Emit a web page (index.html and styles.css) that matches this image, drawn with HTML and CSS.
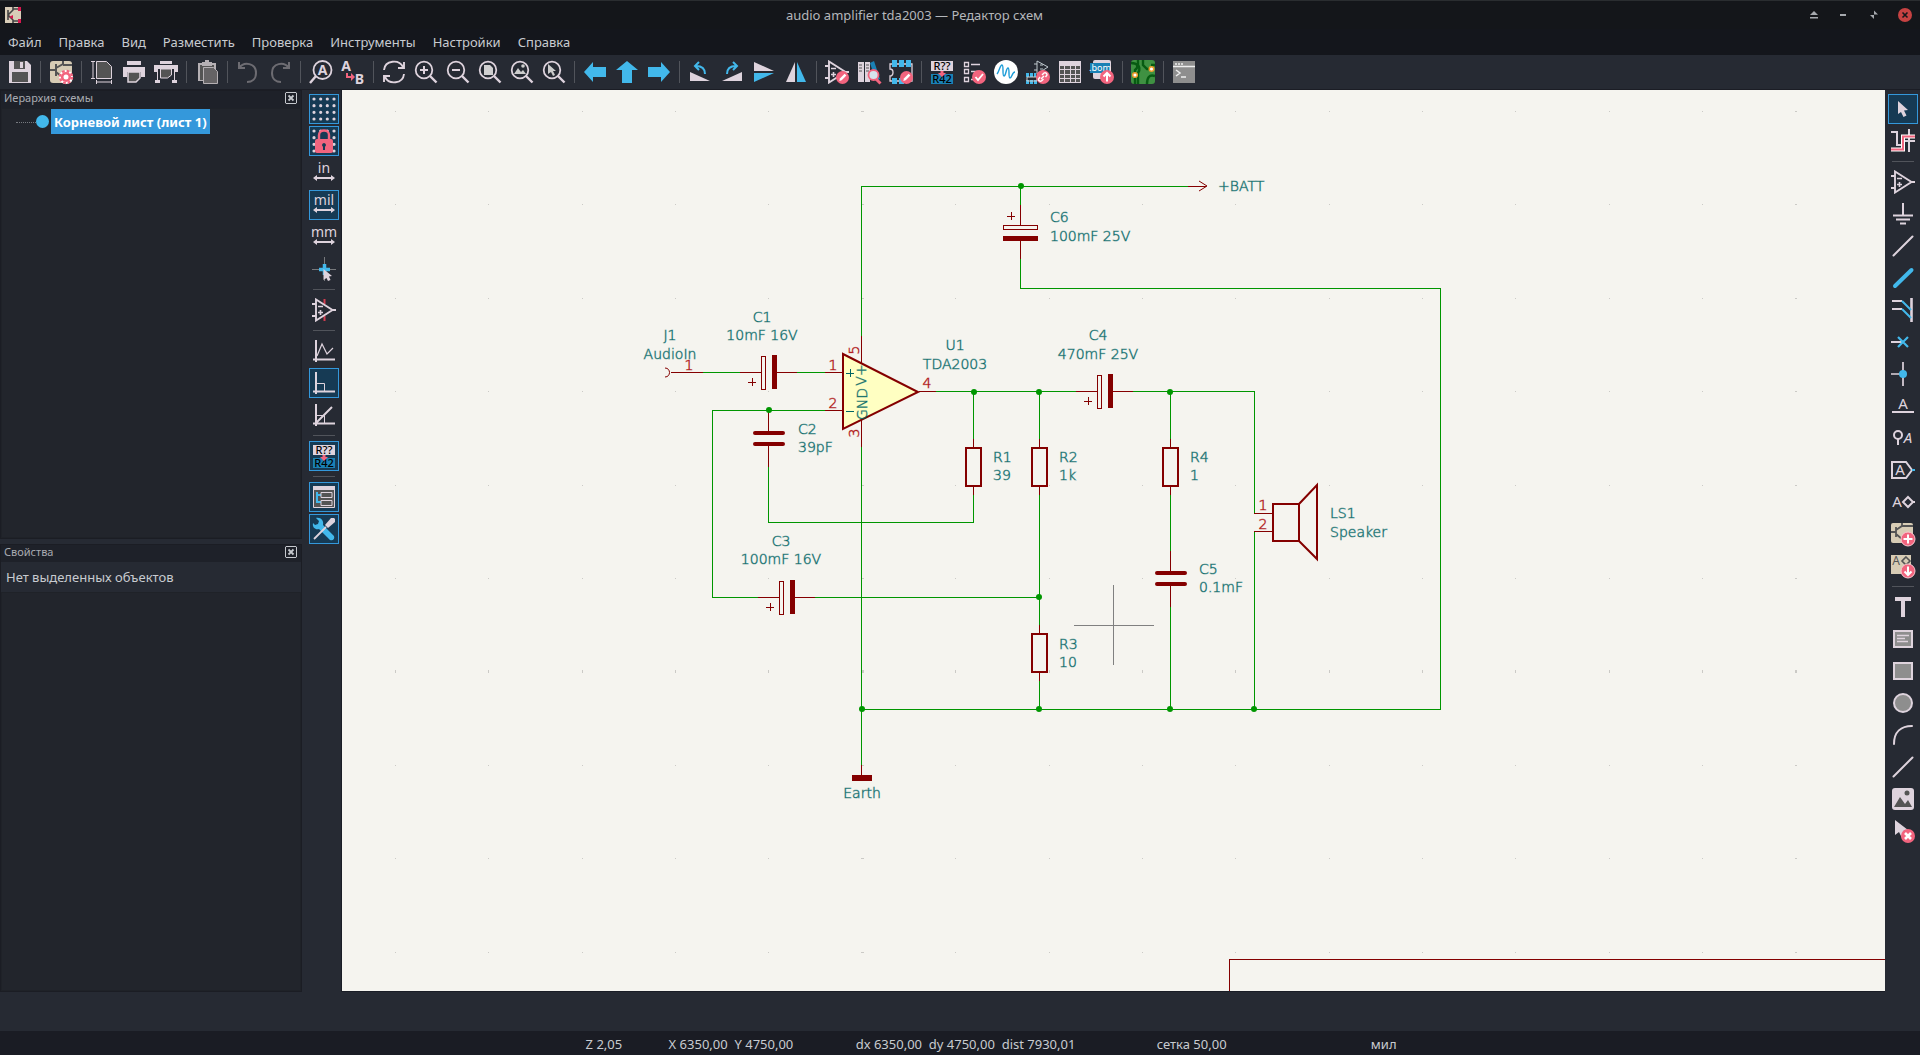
FILE: index.html
```html
<!DOCTYPE html>
<html lang="ru">
<head>
<meta charset="utf-8">
<meta name="viewport" content="width=device-width, initial-scale=1">
<title>audio amplifier tda2003 — Редактор схем</title>
<link rel="stylesheet" href="styles.css">
</head>
<body>
<svg class="defs" aria-hidden="true">
  <symbol id="lens" viewBox="0 0 24 24"><circle cx="10" cy="10" r="8.3" fill="none" stroke="#ded3dd" stroke-width="1.8"/><path d="M16 16l6.500 6.500" stroke="#ded3dd" stroke-width="2.400"/></symbol>
  <symbol id="opamp" viewBox="0 0 24 24"><path d="M4 1.500v21L20.500 12zM0 6h4M0 18h4M20 12h4" fill="none" stroke="#ded3dd" stroke-width="1.900"/><path d="M6 8.500h5M6 14.500h5M8.500 12v5" stroke="#ded3dd" stroke-width="1.600"/></symbol>
  <symbol id="annotate" viewBox="0 0 24 24"><path fill="#ded3dd" d="M1 1h22v10H1z"/><path fill="#1a81b5" d="M1 14h22v10H1z"/><text x="12" y="10" class="ic-r" fill="#545454">R??</text><text x="12" y="23" class="ic-r" fill="#fff">R42</text><path d="M12 17l-4-4h2.500v-2h3v2H16z" fill="#f2647e"/></symbol>
  <symbol id="pencil" viewBox="0 0 24 24"><circle cx="17.500" cy="17.500" r="6.500" fill="#f2647e"/><path d="M14.300 21l.6-2.500 4.700-4.700 1.800 1.800-4.700 4.700z" fill="#fff"/></symbol>
</svg>

<header class="titlebar">
  <svg class="app-icon" viewBox="0 0 16 16"><path fill="#d9cdb8" d="M0 0h16v16H0z"/><path d="M3 3v10M3 8l5-5V0M3 8l5 5v3M8 2h5M8 14h5" fill="none" stroke="#444" stroke-width="1.600"/><path fill="#d8174f" d="M13 0h3v4h-3zM13 12h3v4h-3zM8 8l-4 2 4 2z"/></svg>
  <h1>audio amplifier tda2003 — Редактор схем</h1>
  <div class="window-controls">
    <button aria-label="Свернуть в заголовок"><svg viewBox="0 0 12 12"><path d="M6 2l4 4H2zM2 8h8v1.500H2z" fill="#a6a9ae"/></svg></button>
    <button aria-label="Свернуть"><svg viewBox="0 0 12 12"><path d="M2 5h6v2H2z" fill="#a6a9ae"/></svg></button>
    <button aria-label="Восстановить"><svg viewBox="0 0 12 12"><path d="M6 1.500v4h4zM2 6h4v4z" fill="#a6a9ae"/></svg></button>
    <button aria-label="Закрыть"><svg viewBox="0 0 14 14"><circle cx="7" cy="7" r="7" fill="#c64242"/><path d="M4.500 4.500l5 5m0-5l-5 5" stroke="#15171b" stroke-width="1.600"/></svg></button>
  </div>
</header>

<nav class="menubar">
  <button>Файл</button><button>Правка</button><button>Вид</button><button>Разместить</button><button>Проверка</button><button>Инструменты</button><button>Настройки</button><button>Справка</button>
</nav>

<div class="toolbar top" role="toolbar" aria-label="Главная панель">
  <button aria-label="Сохранить"><svg viewBox="0 0 24 24"><path fill="#ded3dd" d="M1 1h18l4 4v18H1z"/><path fill="#545454" d="M6 1h11v8H6zM4 12h16v10H4z"/><path fill="#ded3dd" d="M12 2h3v6h-3z"/></svg></button>
  <hr>
  <button aria-label="Параметры схемы"><svg viewBox="0 0 24 24"><rect x="1" y="1" width="22" height="22" rx="3" fill="#d7ccb5"/><path d="M1 10h5M7 4v12M7 8l7-4V1M14 5h9M7 12l5 4" fill="none" stroke="#545454" stroke-width="2"/><circle cx="17" cy="17" r="7" fill="#fff"/><circle cx="17" cy="17" r="3.800" fill="#fff" stroke="#f2647e" stroke-width="2.600"/><circle cx="17" cy="17" r="6" fill="none" stroke="#f2647e" stroke-width="2.400" stroke-dasharray="2.700 2"/></svg></button>
  <hr>
  <button aria-label="Параметры страницы"><svg viewBox="0 0 24 24"><path fill="#545454" stroke="#ded3dd" d="M6.500 1.500h10l5 5v12h-15z"/><path fill="none" stroke="#ded3dd" d="M1 1.500h4M1 18.500h4M3 2v16M6.500 20v4M21.500 20v4M7 22h14"/></svg></button>
  <button aria-label="Печать"><svg viewBox="0 0 24 24"><path fill="#ded3dd" d="M5 1h14v4H5zM1 7h22v10h-4v-5H5v5H1z"/><path fill="#545454" stroke="#ded3dd" stroke-width="1.500" d="M6 12h12v6l-4 4H6z"/></svg></button>
  <button aria-label="Чертить"><svg viewBox="0 0 24 24"><path fill="#ded3dd" d="M6 1h12v3H6zM0 5h24v7h-3V9H3v3H0zM3 9h1v12H3zM20 9h1v12h-1zM1 20h5v3H1zM18 20h5v3h-5z"/><path fill="#545454" stroke="#ded3dd" d="M6.500 9h11v6l-4 3h-7z"/></svg></button>
  <hr>
  <button aria-label="Вставить"><svg viewBox="0 0 24 24"><path d="M3 3h18v18H3z" fill="#b5b0b4"/><path d="M5 5h14v15H5z" fill="#545454"/><path d="M7 2h3V0h4v2h3v4H7z" fill="#b5b0b4"/><path d="M8.500 7.500h10l4 4v12h-14z" fill="#656365" stroke="#b5b0b4"/></svg></button>
  <hr>
  <button aria-label="Отменить"><svg viewBox="0 0 24 24"><path d="M3 2v6h6M3 8C8 1 20 3 20 13c0 6-4 9-9 9" fill="none" stroke="#6d6c72" stroke-width="2"/></svg></button>
  <button aria-label="Повторить"><svg viewBox="0 0 24 24"><path d="M21 2v6h-6M21 8C16 1 4 3 4 13c0 6 4 9 9 9" fill="none" stroke="#6d6c72" stroke-width="2"/></svg></button>
  <hr>
  <button aria-label="Найти"><svg viewBox="0 0 24 24"><circle cx="13.500" cy="10" r="9" fill="none" stroke="#ded3dd" stroke-width="1.800"/><path d="M7 16l-6 7" stroke="#ded3dd" stroke-width="2.400"/><text x="13.500" y="15" class="ic-a">A</text></svg></button>
  <button aria-label="Найти и заменить"><svg viewBox="0 0 24 24"><text x="5" y="11" class="ic-a">A</text><text x="18.500" y="23.500" class="ic-a">B</text><path d="M5 13v5h5v3l4-4-4-4v3H7v-3z" fill="#f2647e"/></svg></button>
  <hr>
  <button aria-label="Обновить"><svg viewBox="0 0 24 24"><path d="M2 10C3 0 17-1 21 7M22 14C21 24 7 25 3 17M22 2v6h-6M2 22v-6h6" fill="none" stroke="#ded3dd" stroke-width="1.900"/></svg></button>
  <button aria-label="Увеличить"><svg viewBox="0 0 24 24"><use href="#lens"/><path d="M10 6v8M6 10h8" stroke="#ded3dd" stroke-width="2"/></svg></button>
  <button aria-label="Уменьшить"><svg viewBox="0 0 24 24"><use href="#lens"/><path d="M6 10h8" stroke="#ded3dd" stroke-width="2"/></svg></button>
  <button aria-label="Вписать лист"><svg viewBox="0 0 24 24"><use href="#lens"/><path d="M6 5h6l3 3v7H6z" fill="#d0cfd0"/></svg></button>
  <button aria-label="Вписать объекты"><svg viewBox="0 0 24 24"><use href="#lens"/><path d="M4 14l4-6 3 4 2-2 3 4z" fill="#ccc"/><circle cx="13" cy="6" r="1.800" fill="#ccc"/></svg></button>
  <button aria-label="Выбрать область"><svg viewBox="0 0 24 24"><use href="#lens"/><path d="M6 4v10l3-2 2 4 2-1-2-4h3z" fill="#ccc"/></svg></button>
  <hr>
  <button aria-label="Назад"><svg viewBox="0 0 24 24"><path d="M1 12L10 2v5h13v10H10v5z" fill="#42b8eb"/></svg></button>
  <button aria-label="Вверх"><svg viewBox="0 0 24 24"><path d="M12 1l11 9h-6v13H7V10H1z" fill="#42b8eb"/></svg></button>
  <button aria-label="Вперёд"><svg viewBox="0 0 24 24"><path d="M23 12L14 2v5H1v10h13v5z" fill="#42b8eb"/></svg></button>
  <hr>
  <button aria-label="Повернуть против часовой"><svg viewBox="0 0 24 24"><path d="M2 12v9h20z" fill="#ded3dd"/><path d="M8 6c7 0 9 3 9 8M11 2L7 6l4 4" fill="none" stroke="#42b8eb" stroke-width="2"/></svg></button>
  <button aria-label="Повернуть по часовой"><svg viewBox="0 0 24 24"><path d="M22 12v9H2z" fill="#ded3dd"/><path d="M16 6c-7 0-9 3-9 8M13 2l4 4-4 4" fill="none" stroke="#42b8eb" stroke-width="2"/></svg></button>
  <button aria-label="Отразить по вертикали"><svg viewBox="0 0 24 24"><path d="M2 2l20 9H2z" fill="#ded3dd"/><path d="M2 13h20L2 22z" fill="#42b8eb"/></svg></button>
  <button aria-label="Отразить по горизонтали"><svg viewBox="0 0 24 24"><path d="M11 2v20H2z" fill="#ded3dd"/><path d="M13 2v20h9z" fill="#42b8eb"/></svg></button>
  <hr>
  <button aria-label="Редактор символов"><svg viewBox="0 0 24 24"><use href="#opamp"/><use href="#pencil"/></svg></button>
  <button aria-label="Библиотеки символов"><svg viewBox="0 0 24 24"><path d="M1 2h6v20H1zM8 2h5v20H8z" fill="#ded3dd"/><path d="M2 5h3M2 8h3M2 11h3M9 5h3M9 8h3M9 11h3" stroke="#545454"/><path d="M13 3l4-2 6 18-4 2z" fill="#1a81b5"/><path d="M19 19l4.500 4.500" stroke="#f2647e" stroke-width="3"/><circle cx="16.500" cy="15" r="5" fill="#d5e4ed" stroke="#f2647e" stroke-width="1.800"/></svg></button>
  <button aria-label="Редактор посадочных мест"><svg viewBox="0 0 24 24"><path d="M1 4h22v17H1v-5c4 0 4-7 0-7z" fill="none" stroke="#ded3dd" stroke-width="1.300"/><path d="M3 0h5v7H3zM10 0h5v7h-5zM17 0h5v7h-5zM3 18h5v6H3zM10 18h5v6h-5z" fill="#42b8eb"/><use href="#pencil"/></svg></button>
  <hr>
  <button aria-label="Обозначить компоненты"><svg viewBox="0 0 24 24"><use href="#annotate"/></svg></button>
  <button aria-label="Проверка ЭП"><svg viewBox="0 0 24 24"><path d="M2.500 2.500h4v4h-4zM2.500 9.500h4v4h-4zM2.500 17.500h4v4h-4zM9 4.500h9M9 11.500h7M9 19.500h4" fill="none" stroke="#ded3dd" stroke-width="1.300"/><circle cx="17" cy="17" r="7" fill="#f2647e"/><path d="M13.500 17l2.500 3 5-6" fill="none" stroke="#fff" stroke-width="1.800"/></svg></button>
  <button aria-label="Симулятор"><svg viewBox="0 0 24 24"><circle cx="12" cy="12" r="12" fill="#fff"/><path d="M3 14c2-2 3-9 5-9s0 11 2 11 2-8 4-8 0 10 2 10 2-6 5-6" fill="none" stroke="#1a9bd7" stroke-width="1.400"/></svg></button>
  <button aria-label="Назначить посадочные места"><svg viewBox="0 0 24 24"><path d="M11 1v13l11-7zM8 4h3M8 10h3M14 5h3M14 9h3" fill="none" stroke="#bfc8ce"/><path d="M0 15h10M0 22h12" stroke="#42b8eb" stroke-width="4" stroke-dasharray="3 1"/><path d="M1 17h10v4H1z" fill="none" stroke="#ccc"/><circle cx="17" cy="17" r="7" fill="#f2647e"/><path d="M14 17l-1.500 2a2 2 0 0 0 3 2l2-2m2-2l1.500-2a2 2 0 0 0-3-2l-2 2m-1 4l3-3" fill="none" stroke="#fff" stroke-width="1.400"/></svg></button>
  <button aria-label="Таблица свойств"><svg viewBox="0 0 24 24"><path d="M1 1h22v22H1z" fill="#ded3dd"/><path d="M2 6h4v3H2zM7 6h5v3H7zM13 6h4v3h-4zM18 6h4v3h-4zM2 10h4v4H2zM7 10h5v4H7zM13 10h4v4h-4zM18 10h4v4h-4zM2 15h4v3H2zM7 15h5v3H7zM13 15h4v3h-4zM18 15h4v3h-4zM2 19h4v3H2zM7 19h5v3H7zM13 19h4v3h-4zM18 19h4v3h-4z" fill="#545454"/></svg></button>
  <button aria-label="Перечень элементов"><svg viewBox="0 0 24 24"><rect x="3" y="0" width="18" height="19" rx="2" fill="#ded3dd"/><path d="M0 3h20v10H0z" fill="#1a81b5"/><text x="10" y="11" class="ic-s">.bom</text><circle cx="17" cy="17" r="7" fill="#f2647e"/><path d="M17 21.500v-8M13.500 16.500l3.500-3.500 3.500 3.500" fill="none" stroke="#fff" stroke-width="2"/></svg></button>
  <hr>
  <button aria-label="Редактор плат"><svg viewBox="0 0 24 24"><rect width="24" height="24" rx="3" fill="#3f9142"/><path d="M0 3c7 0 8 4 4 7v14M7 0v5c3 4 1 6 0 8v11M24 16c-6-2-8 2-8 8M12 0v5l4 4h5M24 5h-4" fill="none" stroke="#075b12" stroke-width="2.400"/><circle cx="4" cy="15" r="2.300" fill="#fff" stroke="#ee9c2c" stroke-width="1.500"/><circle cx="20.500" cy="9" r="2.300" fill="#fff" stroke="#ee9c2c" stroke-width="1.500"/></svg></button>
  <hr>
  <button aria-label="Консоль"><svg viewBox="0 0 24 24"><path d="M1 1h22v22H1z" fill="#8e8e8e"/><path d="M1 6.500h22M3 4h2M6 4h2M9 4h2M4 10l4 3-4 3M9 17h5" fill="none" stroke="#eee" stroke-width="1.500"/></svg></button>
</div>

<main class="workspace">
  <aside class="docks">
    <section class="dock">
      <header><h2>Иерархия схемы</h2><button class="close" aria-label="Закрыть панель"><svg viewBox="0 0 12 12"><path d="M1 .5h10l.5.5v10l-.5.5H1L.5 11V1z" fill="none" stroke="#c5c8cd"/><path d="M3.500 3.500l5 5m0-5l-5 5" stroke="#c5c8cd" stroke-width="1.800"/></svg></button></header>
      <div class="dock-body tree"><span class="branch"></span><span class="sheet-dot"></span><a href="#sheet">Корневой лист (лист 1)</a></div>
    </section>
    <section class="dock">
      <header><h2>Свойства</h2><button class="close" aria-label="Закрыть панель"><svg viewBox="0 0 12 12"><path d="M1 .5h10l.5.5v10l-.5.5H1L.5 11V1z" fill="none" stroke="#c5c8cd"/><path d="M3.500 3.500l5 5m0-5l-5 5" stroke="#c5c8cd" stroke-width="1.800"/></svg></button></header>
      <p class="empty">Нет выделенных объектов</p>
      <div class="dock-body"></div>
    </section>
  </aside>

  <div class="toolbar side left" role="toolbar" aria-label="Параметры отображения">
    <button aria-pressed="true" aria-label="Сетка"><svg viewBox="0 0 24 24"><path id="griddots" d="M2 2h.01M8.700 2h.01M15.300 2h.01M22 2h.01M2 8.700h.01M8.700 8.700h.01M15.300 8.700h.01M22 8.700h.01M2 15.300h.01M8.700 15.300h.01M15.300 15.300h.01M22 15.300h.01M2 22h.01M8.700 22h.01M15.300 22h.01M22 22h.01" stroke="#ded3dd" stroke-width="3.200" stroke-linecap="round"/></svg></button>
    <button aria-pressed="true" aria-label="Блокировка сетки"><svg viewBox="0 0 24 24"><use href="#griddots"/><path d="M7 11V6c0-6 10-6 10 0v5" fill="#163a54" stroke="#f2647e" stroke-width="2.400"/><rect x="3" y="10" width="18" height="14" rx="2" fill="#f2647e"/><path d="M12 14a2 2 0 0 1 1 3.700V21h-2v-3.300a2 2 0 0 1 1-3.700z" fill="#163a54"/></svg></button>
    <button aria-label="Дюймы"><svg viewBox="0 0 24 24"><text x="12" y="12" class="ic-u">in</text><path id="dimarrow" d="M1 17l4-3v2h14v-2l4 3-4 3v-2H5v2z" fill="#ded3dd"/></svg></button>
    <button aria-pressed="true" aria-label="Милы"><svg viewBox="0 0 24 24"><text x="12" y="12" class="ic-u">mil</text><use href="#dimarrow"/></svg></button>
    <button aria-label="Миллиметры"><svg viewBox="0 0 24 24"><text x="12" y="12" class="ic-u">mm</text><use href="#dimarrow"/></svg></button>
    <button aria-label="Курсор"><svg viewBox="0 0 24 24"><path d="M12.500 0v24M0 12.500h24" stroke="#77797d"/><path d="M12.500 7v11M7 12.500h11" stroke="#42b8eb" stroke-width="3.500"/><path d="M11.500 12v11l3-2 1.500 3 2.500-1-1.500-3.500 3-.5z" fill="#ded3dd"/></svg></button>
    <hr>
    <button aria-label="Скрытые выводы"><svg viewBox="0 0 24 24"><path d="M12.500 1v5M12.500 18v5" stroke="#d13d50" stroke-width="2"/><use href="#opamp"/></svg></button>
    <hr>
    <button aria-label="Линии под любым углом"><svg viewBox="0 0 24 24"><path d="M4 1v22M1 20.500h22" stroke="#ded3dd" stroke-width="2"/><path d="M5 17l5-12 5 10 6-6" fill="none" stroke="#ded3dd" stroke-width="1.200"/></svg></button>
    <button aria-pressed="true" aria-label="Линии под прямым углом"><svg viewBox="0 0 24 24"><path d="M4 1v22M1 20.500h22" stroke="#ded3dd" stroke-width="2"/><path d="M5 12.500h7.500V20" fill="none" stroke="#ded3dd"/></svg></button>
    <button aria-label="Линии под углом 45"><svg viewBox="0 0 24 24"><path d="M4 1v22M1 20.500h22M4 20L20 4" stroke="#ded3dd" stroke-width="2"/><path d="M5 12.500h7.500V20" fill="none" stroke="#ded3dd"/></svg></button>
    <hr>
    <button aria-pressed="true" aria-label="Автообозначение"><svg viewBox="0 0 24 24"><use href="#annotate"/></svg></button>
    <hr>
    <button aria-pressed="true" aria-label="Навигатор"><svg viewBox="0 0 24 24"><path d="M1.500 1.500h21v21h-21z" fill="#545454" stroke="#ded3dd"/><path d="M1 1h22v4H1z" fill="#ded3dd"/><path d="M5 7v10h4M5 10h4" fill="none" stroke="#42b8eb" stroke-width="2"/><path d="M9 7.500h11v5H9zM9 15.500h11v5H9z" fill="#545454" stroke="#ded3dd"/></svg></button>
    <button aria-pressed="true" aria-label="Свойства"><svg viewBox="0 0 24 24"><path d="M4 1l3 3-1 3-3 1-2-2c-1 5 3 7 6 6l11 11c3 1 5-1 4-4L11 8c1-4-2-8-7-7z" fill="#42b8eb"/><path d="M2 22L14 10" stroke="#ded3dd" stroke-width="1.800"/><path d="M13 8l6-7h3l1 1v3l-7 6z" fill="#ded3dd"/></svg></button>
  </div>

  <section class="canvas" id="sheet" aria-label="Схема">
    <svg class="schematic">
      <defs>
        <path id="dots" d="M53 0h1M146 0h1M240 0h1M333 0h1M426 0h1M613 0h1M707 0h1M800 0h1M893 0h1M987 0h1M1080 0h1M1173 0h1M1267 0h1M1360 0h1M519 0h3M1453 0h2"/>
        <g id="res"><path d="M0-28v8M0 20v8"/><path class="body" d="M-7-19H8v38H-7z"/></g>
        <g id="capv"><path d="M0-20v20M0 14v22"/><path class="plate" d="M-13 2h28M-13 13h28"/></g>
        <g id="caph"><path d="M-37 0h21M0 0h20M-29 10h8M-25 6v8"/><path d="M-16-16h4v33h-4z"/><path class="solid" d="M-5-17h5v34h-5z"/></g>
        <circle id="j" r="3"/>
      </defs>
      <g class="grid">
        <use href="#dots" y="21"/><use href="#dots" y="114"/><use href="#dots" y="208"/><use href="#dots" y="301"/><use href="#dots" y="395"/><use href="#dots" y="488"/><use href="#dots" y="580"/><use href="#dots" y="581"/><use href="#dots" y="582"/><use href="#dots" y="675"/><use href="#dots" y="768"/><use href="#dots" y="862"/>
      </g>
      <g transform="translate(-342 -90)">
        <path class="frame" d="M1885 959H1229V992"/>
        <path class="wire" d="M861 336V186H1188M1020 186V205M1020 259V288H1440V709H861M861 447V765M703 372H741M796 372H825M825 410H712V597H760M815 597H1039M768 465V522H973V494M936 391H1077M973 391V439M1039 391V439M1039 494V626M1039 681V709M1132 391H1254V513M1170 391V439M1170 494V551M1170 606V709M1254 531V709"/>
        <path class="part" d="M861 336V363M861 420V447M825 372H842M825 410H842M919 391H936M671 372H703M1254 513H1272M1254 531H1272M861 765V775M1188 186H1206"/>
        <path class="arc" d="M1199 181L1207 186L1199 191M665 368C671 368 671 377 665 377"/>
        <path class="amp" d="M843 354L918 392L843 429z"/>
        <path class="amp open" d="M1273 504H1299V541H1273zM1299 504L1317 485V559L1299 541"/>
        <path class="bar" d="M852 775H872V781H852z"/>
        <g class="part"><use href="#caph" x="777" y="372"/><use href="#caph" x="1113" y="391"/><use href="#caph" x="795" y="597"/>
          <use href="#capv" x="768" y="431"/><use href="#capv" x="1170" y="571"/>
          <use href="#res" x="973" y="467"/><use href="#res" x="1039" y="467"/><use href="#res" x="1170" y="467"/><use href="#res" x="1039" y="653"/>
          <path d="M1020 205V225M1003 225H1037V229H1003zM1020 241V259M1007 216H1015M1011 212V220"/><path class="solid" d="M1003 236H1038V241H1003z"/></g>
        <g class="joint"><use href="#j" x="1021" y="186"/><use href="#j" x="769" y="410"/><use href="#j" x="974" y="392"/><use href="#j" x="1039" y="392"/><use href="#j" x="1170" y="392"/><use href="#j" x="1039" y="597"/><use href="#j" x="862" y="709"/><use href="#j" x="1039" y="709"/><use href="#j" x="1170" y="709"/><use href="#j" x="1254" y="709"/></g>
        <g class="label mid"><text x="670" y="340">J1</text><text x="670" y="359">AudioIn</text><text x="762" y="322">C1</text><text x="762" y="340">10mF 16V</text><text x="955" y="350">U1</text><text x="955" y="369">TDA2003</text><text x="1098" y="340">C4</text><text x="1098" y="359">470mF 25V</text><text x="781" y="546">C3</text><text x="781" y="564">100mF 16V</text><text x="862" y="798">Earth</text>
          <text transform="translate(866 375) rotate(-90)">V+</text><text transform="translate(867 404) rotate(-90)">GND</text></g>
        <g class="label"><text x="1218" y="191">+BATT</text><text x="1050" y="222">C6</text><text x="1050" y="241">100mF 25V</text><text x="798" y="434">C2</text><text x="798" y="452">39pF</text><text x="993" y="462">R1</text><text x="993" y="480">39</text><text x="1059" y="462">R2</text><text x="1059" y="480">1k</text><text x="1190" y="462">R4</text><text x="1190" y="480">1</text><text x="1059" y="649">R3</text><text x="1059" y="667">10</text><text x="1199" y="574">C5</text><text x="1199" y="592">0.1mF</text><text x="1330" y="518">LS1</text><text x="1330" y="537">Speaker</text></g>
        <g class="label mid pin"><text x="689" y="370">1</text><text x="833" y="370">1</text><text x="833" y="408">2</text><text x="927" y="388">4</text><text x="1263" y="510">1</text><text x="1263" y="529">2</text><text transform="translate(859 350) rotate(-90)">5</text><text transform="translate(859 433) rotate(-90)">3</text></g>
        <path class="sign" d="M846 373H854M850 369V377M846 411H854"/>
        <path class="cross" d="M1074 625H1154M1113 585V665"/>
      </g>
    </svg>
  </section>

  <div class="toolbar side right" role="toolbar" aria-label="Инструменты">
    <button aria-pressed="true" aria-label="Выбор"><svg viewBox="0 0 24 24"><path d="M7 4v13l3-2 2.500 5 3-1.500L13 13.500l4-.5z" fill="#ded3dd"/></svg></button>
    <button aria-label="Подсветить цепь"><svg viewBox="0 0 24 24"><path d="M0 3h6v13h6M18 0v23M14 12h10" fill="none" stroke="#ded3dd" stroke-width="2"/><path d="M0 20.500h12V7.500h12" fill="none" stroke="#fff" stroke-width="4"/><path d="M0 20.500h12V7.500h12" fill="none" stroke="#f2647e" stroke-width="2"/></svg></button>
    <hr>
    <button aria-label="Добавить символ"><svg viewBox="0 0 24 24"><use href="#opamp"/></svg></button>
    <button aria-label="Символ питания"><svg viewBox="0 0 24 24"><path d="M12 1v12M2 13.500h20M5 17.500h14M9 21.500h6" stroke="#ded3dd" stroke-width="2"/></svg></button>
    <button aria-label="Проводник"><svg viewBox="0 0 24 24"><path d="M2.500 21.500l19-19" stroke="#ded3dd" stroke-width="2" stroke-linecap="round"/></svg></button>
    <button aria-label="Шина"><svg viewBox="0 0 24 24"><path d="M4 20L20.500 4" stroke="#42b8eb" stroke-width="4" stroke-linecap="round"/></svg></button>
    <button aria-label="Вход в шину"><svg viewBox="0 0 24 24"><path d="M1 3h10M1 11h10" stroke="#ded3dd" stroke-width="2"/><path d="M20.500 0v24" stroke="#ded3dd" stroke-width="2.600"/><path d="M11 3l9 9M11 11l9 9" stroke="#42b8eb" stroke-width="2"/></svg></button>
    <button aria-label="Не подключено"><svg viewBox="0 0 24 24"><path d="M0 12h12" stroke="#ded3dd" stroke-width="2"/><path d="M7 7l10 10m0-10L7 17" stroke="#42b8eb" stroke-width="2.200"/></svg></button>
    <button aria-label="Соединение"><svg viewBox="0 0 24 24"><path d="M0 12h12M12 0v24" stroke="#ded3dd" stroke-width="1.700"/><circle cx="12" cy="12" r="4" fill="#42b8eb"/></svg></button>
    <button aria-label="Метка"><svg viewBox="0 0 24 24"><text x="12" y="15" class="ic-l">A</text><path d="M1 18h22" stroke="#ded3dd" stroke-width="2"/></svg></button>
    <button aria-label="Класс цепи"><svg viewBox="0 0 24 24"><circle cx="7" cy="9" r="4" fill="none" stroke="#ded3dd" stroke-width="2"/><path d="M7 13v6" stroke="#ded3dd" stroke-width="2"/><text x="17" y="17" class="ic-l it">A</text></svg></button>
    <button aria-label="Глобальная метка"><svg viewBox="0 0 24 24"><path d="M1 4h14l6 8-6 8H1z" fill="none" stroke="#ded3dd" stroke-width="2"/><path d="M21 12h3" stroke="#42b8eb" stroke-width="2"/><text x="9" y="17" class="ic-l">A</text></svg></button>
    <button aria-label="Иерархическая метка"><svg viewBox="0 0 24 24"><text x="6" y="17" class="ic-l">A</text><path d="M17 7l5 5-5 5-5-5zM22 12h2" fill="none" stroke="#ded3dd" stroke-width="2"/></svg></button>
    <button aria-label="Добавить лист"><svg viewBox="0 0 24 24"><rect y="1" width="22" height="20" rx="2" fill="#d7ccb5"/><path d="M0 10h5M5 5v10M5 8l6-4h11M5 12l6 5M11 1v3" fill="none" stroke="#545454" stroke-width="1.800"/><circle cx="17" cy="17" r="7" fill="#f2647e" stroke="#f7c8cf"/><path d="M17 12.500v9M12.500 17h9" stroke="#fff" stroke-width="2"/></svg></button>
    <button aria-label="Выводы листа"><svg viewBox="0 0 24 24"><path d="M0 1h20v19H0z" fill="#d7ccb5"/><text x="5" y="11" class="ic-d">A</text><path d="M15 3l4 4-4 4-4-4z" fill="none" stroke="#545454" stroke-width="1.600"/><circle cx="17" cy="17" r="7" fill="#f2647e" stroke="#f7c8cf"/><path d="M17 12.500v8M13.500 17.500l3.500 3.500 3.500-3.500" fill="none" stroke="#fff" stroke-width="2"/></svg></button>
    <hr>
    <button aria-label="Текст"><svg viewBox="0 0 24 24"><path d="M4 2h16v4h-6v16h-4V6H4z" fill="#ded3dd"/></svg></button>
    <button aria-label="Текстовое поле"><svg viewBox="0 0 24 24"><path d="M3 4h18v16H3z" fill="#8e8e8e" stroke="#ded3dd" stroke-width="2"/><path d="M6 8.500h12M6 11.500h8M6 14.500h11" stroke="#ded3dd" stroke-width="1.300"/></svg></button>
    <button aria-label="Прямоугольник"><svg viewBox="0 0 24 24"><path d="M3 4h18v16H3z" fill="#8e8e8e" stroke="#ded3dd" stroke-width="2"/></svg></button>
    <button aria-label="Окружность"><svg viewBox="0 0 24 24"><circle cx="12" cy="12" r="9" fill="#8e8e8e" stroke="#ded3dd" stroke-width="2"/></svg></button>
    <button aria-label="Дуга"><svg viewBox="0 0 24 24"><path d="M3 21C3 9 10 3 21 3" fill="none" stroke="#ded3dd" stroke-width="2" stroke-linecap="round"/></svg></button>
    <button aria-label="Линия"><svg viewBox="0 0 24 24"><path d="M2.500 21.500l19-19" stroke="#ded3dd" stroke-width="2" stroke-linecap="round"/></svg></button>
    <button aria-label="Изображение"><svg viewBox="0 0 24 24"><rect x="1" y="1" width="22" height="22" rx="3" fill="#ded3dd"/><path d="M3 20L9 10l5 7 3-4 4 7z" fill="#545454"/><circle cx="16" cy="6" r="2.500" fill="#545454"/></svg></button>
    <button aria-label="Удалить"><svg viewBox="0 0 24 24"><path d="M4 1v15l4-3 3 6 4-2-3-5 5-1z" fill="#ded3dd"/><circle cx="17" cy="17" r="7" fill="#f2647e"/><path d="M14 14l6 6m0-6l-6 6" stroke="#fff" stroke-width="2.600"/></svg></button>
  </div>
</main>

<footer class="statusbar">
  <span>Z 2,05</span><span>X 6350,00&nbsp; Y 4750,00</span><span>dx 6350,00&nbsp; dy 4750,00&nbsp; dist 7930,01</span><span>сетка 50,00</span><span>мил</span>
</footer>
</body>
</html>
```
FILE: styles.css
```css
* { box-sizing: border-box; }
body {
  margin: 0;
  min-height: 100vh;
  display: flex;
  flex-direction: column;
  background: #262a33;
  color: #c8cbd0;
  font: 13px/18px "Noto Sans", sans-serif;
}
button {
  border: 0;
  padding: 0;
  margin: 0;
  background: none;
  color: inherit;
  font: inherit;
}
h1, h2, p { margin: 0; font-weight: 400; }
.defs { display: none; }

.titlebar {
  display: flex;
  align-items: center;
  height: 29px;
  padding: 0 8px 0 5px;
  background: #14161a;
  border-top: 1px solid #2a2d30;
}
.app-icon { width: 16px; height: 16px; }
.titlebar h1 { flex: 1; text-align: center; font-size: 13px; color: #b4b7bb; }
.window-controls { display: flex; gap: 18px; align-items: center; }
.window-controls button { display: flex; }
.window-controls svg { width: 12px; height: 12px; }
.window-controls button:last-child svg { width: 14px; height: 14px; }

.menubar {
  display: flex;
  align-items: center;
  gap: 17px;
  height: 26px;
  padding: 0 8px;
  background: #14161c;
}

.toolbar { display: flex; gap: 2px; flex: none; }
.toolbar button {
  width: 30px;
  height: 30px;
  padding: 2px;
  border: 1px solid transparent;
}
.toolbar button[aria-pressed="true"] { background: #163a54; border-color: #3498db; }
.toolbar svg { display: block; width: 24px; height: 24px; overflow: visible; }
.toolbar hr { border: 0; background: #51545b; }
.top {
  height: 35px;
  padding: 2px 5px;
  border-bottom: 1px solid #1b1d25;
}
.top hr { width: 1px; height: 22px; margin: 4px 3px; }
.side { flex-direction: column; padding-top: 4px; }
.side hr { width: 22px; height: 1px; margin: 3px 4px; }
.left { width: 39px; padding-left: 7px; }
.right { width: 35px; padding-left: 3px; }

.ic-r, .ic-a, .ic-s, .ic-u, .ic-l, .ic-d { font-family: "Noto Sans", sans-serif; text-anchor: middle; fill: #ded3dd; }
.ic-r { font-size: 11px; font-weight: 500; fill: inherit; }
.ic-a { font-size: 14px; font-weight: 700; }
.ic-s { font-size: 9px; fill: #fff; }
.ic-u { font-size: 14px; }
.ic-l { font-size: 15px; }
.ic-d { font-size: 12px; fill: #545454; }
.it { font-style: italic; }

.workspace { display: flex; flex: 1; margin-bottom: 39px; }
.docks {
  width: 302px;
  display: grid;
  grid-template-rows: 1fr 1fr;
  gap: 5px;
}
.dock {
  display: flex;
  flex-direction: column;
  border: 1px solid #1b1d24;
}
.dock header {
  display: flex;
  justify-content: space-between;
  align-items: flex-start;
  height: 17px;
  padding: 0 4px 0 3px;
  background: #1e2129;
}
.dock h2 { font-size: 11px; line-height: 13px; color: #a9acb2; }
.close { display: flex; padding-top: 1px; }
.close svg { width: 12px; height: 12px; }
.dock-body { flex: 1; background: #22252c; border: 1px solid #1f2228; }
.tree { display: flex; align-items: flex-start; padding-left: 14px; }
.branch { width: 20px; border-top: 1px dotted #777a80; margin-top: 13px; }
.sheet-dot { width: 13px; height: 13px; margin: 6px 2px 0 0; border-radius: 50%; background: #42b8eb; }
.tree a {
  padding: 4px 3px 3px;
  font-weight: 700;
  color: #fff;
  background: #3498db;
  text-decoration: none;
}
.empty { padding: 6px 5px; height: 30px; }

.canvas {
  flex: 1;
  min-width: 0;
  background: #f5f4ef;
  border: solid #1a1d26;
  border-width: 0 0 1px 1px;
  overflow: hidden;
}
.schematic { display: block; width: 100%; height: 100%; }
.schematic path { fill: none; shape-rendering: crispEdges; }
.schematic .grid { stroke: #cbcac6; }
.schematic .wire { stroke: #009600; }
.schematic .part, .schematic .frame { stroke: #840000; }
.schematic .arc { stroke: #840000; shape-rendering: auto; }
.schematic .amp { fill: #ffffc2; stroke: #840000; stroke-width: 2; shape-rendering: auto; }
.schematic .open { fill: none; }
.schematic .bar { fill: #840000; }
.schematic .solid { fill: #840000; stroke: none; }
.schematic .body { stroke-width: 2; }
.schematic .plate { stroke-width: 4; stroke-linecap: round; shape-rendering: auto; }
.schematic .sign { stroke: #006464; }
.schematic .cross { stroke: #808080; }
.joint { fill: #009600; }
.label {
  font: 200 14px "DejaVu Sans", "DejaVu Sans Light", sans-serif;
  fill: #006464;
  stroke: #006464;
  stroke-width: 1px;
  stroke-opacity: .4;
}
.mid { text-anchor: middle; }
.pin { fill: #a90000; stroke: #a90000; }

.statusbar {
  display: grid;
  grid-template-columns: 83fr 187fr 301fr 214fr 549fr;
  align-items: center;
  height: 24px;
  padding: 2px 0 0 30.500%;
  background: #1a1c24;
  white-space: nowrap;
}
```
